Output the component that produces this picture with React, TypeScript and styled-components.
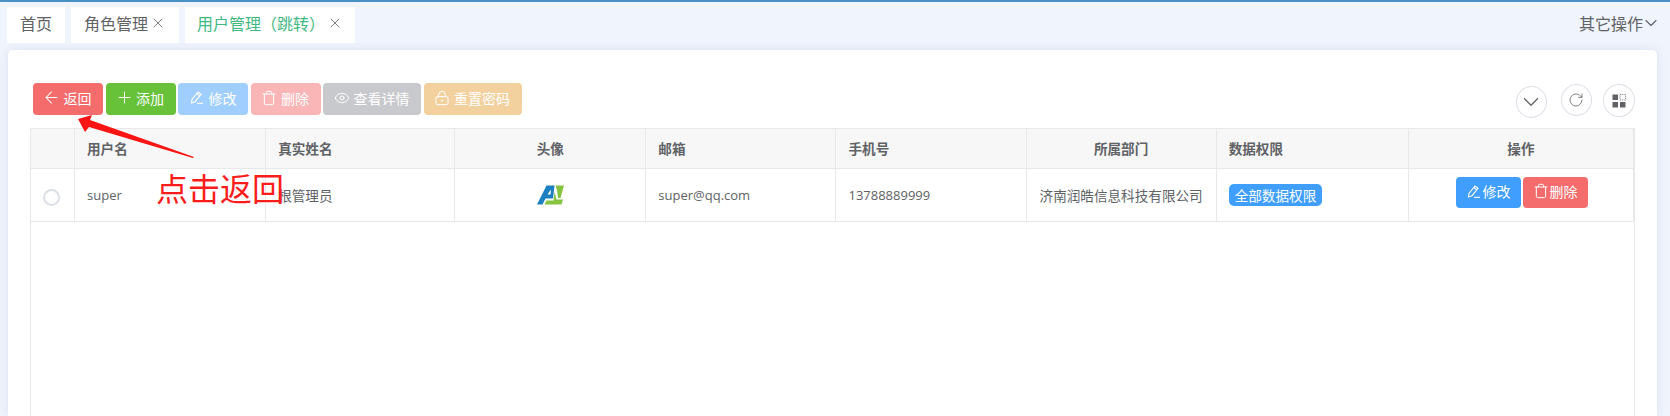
import React from "react";
import styled, { createGlobalStyle } from "styled-components";
import { ArrowLeft, ChevronDown, Eye, LockKeyhole, Plus, RotateCw, Trash, X } from "lucide-react";

const GlobalStyle = createGlobalStyle`
  html, body {
    margin: 0;
    padding: 0;
    height: 416px;
    overflow: hidden;
  }

  body {
    font-family: "Open Sans", "Noto Sans CJK SC", sans-serif;
    font-size: 13.6px;
    color: #606266;
  }
`;

const Page = styled.div`
  position: relative;
  display: flex;
  flex-direction: column;
  height: 416px;
  box-sizing: border-box;
  overflow: hidden;
  background: #f0f4fc;
  border-top: 2px solid #4a90c4;
`;

const TabBar = styled.div`
  display: flex;
  align-items: center;
  gap: 6px;
  height: 36px;
  margin: 5px 13px 7px 7px;
`;

const Tab = styled.div<{ $active?: boolean; $width: number }>`
  display: flex;
  align-items: center;
  justify-content: center;
  gap: 2px;
  width: ${({ $width }) => $width}px;
  height: 36px;
  box-sizing: border-box;
  padding-bottom: 5px;
  background: #fff;
  font-size: 16px;
  color: ${({ $active }) => ($active ? "#42b983" : "#606266")};

  svg {
    color: #606266;
  }
`;

const MoreMenu = styled.div`
  display: flex;
  align-items: center;
  margin-left: auto;
  padding-bottom: 4px;
  font-size: 16px;
  color: #606266;

  svg {
    margin: 0 -4px 0 -2px;
  }
`;

const Card = styled.main`
  display: flex;
  flex: 1;
  flex-direction: column;
  min-height: 0;
  margin: 0 13px 0 8px;
  padding: 33px 22px 0;
  background: #fff;
  border-radius: 5px 5px 0 0;
  box-shadow: 0 0 10px rgba(190, 200, 230, 0.45);
`;

const Toolbar = styled.div`
  display: flex;
  justify-content: space-between;
  height: 32px;
  margin-bottom: 13px;
`;

const ButtonGroup = styled.div`
  display: flex;
  gap: 2.5px;
  margin-left: 3px;
`;

const ActionButton = styled.button<{ $color: string; $small?: boolean }>`
  display: inline-flex;
  align-items: center;
  justify-content: center;
  gap: ${({ $small }) => ($small ? 1 : 5)}px;
  height: ${({ $small }) => ($small ? 31 : 32)}px;
  padding: 0 ${({ $small }) => ($small ? 11 : 11.5)}px 3px;
  border: 0;
  border-radius: 4px;
  background: ${({ $color }) => $color};
  color: #fff;
  font-family: inherit;
  font-size: 14px;
`;

const IconSlot = styled.span`
  display: flex;
  flex: none;
  align-items: center;
  justify-content: center;
  width: 14px;
  height: 14px;
`;

const RoundTools = styled.div`
  display: flex;
  gap: 11.5px;
  margin-top: 1px;
`;

const RoundButton = styled.button<{ $size: number; $offset?: boolean }>`
  display: flex;
  align-items: center;
  justify-content: center;
  width: ${({ $size }) => $size}px;
  height: ${({ $size }) => $size + 1}px;
  margin-top: ${({ $offset }) => ($offset ? 2 : 0)}px;
  margin-right: ${({ $offset }) => ($offset ? 2.5 : 0)}px;
  padding: 0;
  border: 1px solid #dcdfe6;
  border-radius: 50%;
  background: #fff;
  color: #606266;
`;

const TableWrap = styled.div`
  flex: 1;
  min-height: 0;
  box-sizing: border-box;
  border: 1px solid #e8e8e8;
  border-bottom: 0;
`;

const Table = styled.table`
  width: 1603px;
  table-layout: fixed;
  border-collapse: separate;
  border-spacing: 0;
`;

const HeadCell = styled.th<{ $center?: boolean }>`
  height: 40px;
  padding: 0 12px 2px;
  box-sizing: border-box;
  background: #f7f7f7;
  border-right: 1px solid #e8e8e8;
  border-bottom: 1px solid #e8e8e8;
  font-size: 13.6px;
  font-weight: 700;
  color: #606266;
  text-align: ${({ $center }) => ($center ? "center" : "left")};
`;

const Cell = styled.td<{ $center?: boolean; $latin?: boolean }>`
  height: 53px;
  padding: 0 12px;
  box-sizing: border-box;
  border-right: 1px solid #e8e8e8;
  border-bottom: 1px solid #e8e8e8;
  font-size: ${({ $latin }) => ($latin ? 13 : 13.6)}px;
  color: #606266;
  text-align: ${({ $center }) => ($center ? "center" : "left")};
  white-space: nowrap;
`;

const Radio = styled.span`
  display: block;
  width: 17px;
  height: 17px;
  box-sizing: border-box;
  margin: 4px 0 0;
  border: 2px solid #dcdfe6;
  border-radius: 50%;
`;

const Tag = styled.span`
  display: inline-block;
  height: 22px;
  padding: 0 6px;
  border-radius: 5px;
  background: #409eff;
  color: #fff;
  font-size: 13.6px;
  line-height: 23px;
`;

const RowActions = styled.div`
  display: flex;
  justify-content: center;
  gap: 2px;
  padding-left: 3px;
  padding-bottom: 5px;
`;

const Annotation = styled.div`
  position: absolute;
  top: 167px;
  left: 156px;
  color: #fb1c1c;
  font-family: "Noto Sans CJK SC", sans-serif;
  font-size: 32px;
  font-weight: 400;
  line-height: 36px;
  white-space: nowrap;
`;

const ArrowMark = styled.svg`
  position: absolute;
  top: 0;
  left: 0;
`;

const columns = [44, 191, 189, 191, 190, 190, 190, 192, 225];

const EditIcon = () => (
  <svg width="15" height="15" viewBox="0 0 14 14" fill="none" stroke="currentColor" strokeWidth="1.1">
    <path d="M1.5 12.5 2 9 8 1.5 11 3.8 5 11.2z" />
    <path d="M6.8 3 9.8 5.3" />
    <path d="M7 12.8H13" />
  </svg>
);

const GridIcon = () => (
  <svg width="14" height="14" viewBox="0 0 14 14" fill="#606266">
    <rect x="0.5" y="0.5" width="5.5" height="5.5" />
    <rect x="8" y="0.5" width="5.5" height="5.5" fill="none" stroke="#606266" strokeWidth="0.8" strokeDasharray="1.2 1" />
    <rect x="0.5" y="8" width="5.5" height="5.5" />
    <rect x="8" y="8" width="5.5" height="5.5" />
  </svg>
);

const Logo = () => (
  <svg width="27" height="20" viewBox="0 0 27 20" style={{ display: "block", margin: "0 auto" }}>
    <path fillRule="evenodd" d="M0 19.5 9.5 0.5H17.5L16 13.5H8.5L5.5 19.5zM10.5 9.5H13.5L14 4.5z" fill="#1c7fc0" />
    <path d="M18.5 0.5H27L23.5 13 21 13 20 5z" fill="#86c440" />
    <path d="M17.5 7 19.5 14.5H26L24.5 19.5H7.5L9.5 15.5H16.5z" fill="#86c440" />
  </svg>
);

function App(): JSX.Element {
  return (
    <Page>
      <GlobalStyle />
      <TabBar>
        <Tab $width={58}>首页</Tab>
        <Tab $width={108}>
          角色管理
          <X size={16} strokeWidth={1.2} />
        </Tab>
        <Tab $width={170} $active>
          用户管理（跳转）
          <X size={16} strokeWidth={1.2} />
        </Tab>
        <MoreMenu>
          其它操作
          <ChevronDown size={20} strokeWidth={1.3} />
        </MoreMenu>
      </TabBar>
      <Card>
        <Toolbar>
          <ButtonGroup>
            <ActionButton $color="#f56c6c">
              <IconSlot><ArrowLeft size={19} strokeWidth={1.3} style={{ flex: "none" }} /></IconSlot>返回
            </ActionButton>
            <ActionButton $color="#67c23a">
              <IconSlot><Plus size={19} strokeWidth={1.3} style={{ flex: "none" }} /></IconSlot>添加
            </ActionButton>
            <ActionButton $color="#a0cfff">
              <IconSlot><EditIcon /></IconSlot>修改
            </ActionButton>
            <ActionButton $color="#fab6b6">
              <IconSlot><Trash size={16} strokeWidth={1.5} style={{ flex: "none" }} /></IconSlot>删除
            </ActionButton>
            <ActionButton $color="#c8c9cc">
              <IconSlot><Eye size={16} strokeWidth={1.5} style={{ flex: "none" }} /></IconSlot>查看详情
            </ActionButton>
            <ActionButton $color="#f3d19e">
              <IconSlot><LockKeyhole size={16} strokeWidth={1.5} style={{ flex: "none" }} /></IconSlot>重置密码
            </ActionButton>
          </ButtonGroup>
          <RoundTools>
            <RoundButton $size={31} $offset><ChevronDown size={26} strokeWidth={1.2} /></RoundButton>
            <RoundButton $size={31}><RotateCw size={16} strokeWidth={1.2} /></RoundButton>
            <RoundButton $size={32}><GridIcon /></RoundButton>
          </RoundTools>
        </Toolbar>
        <TableWrap>
          <Table>
            <colgroup>
              {columns.map((width, index) => (
                <col key={index} style={{ width }} />
              ))}
            </colgroup>
            <thead>
              <tr>
                <HeadCell />
                <HeadCell>用户名</HeadCell>
                <HeadCell>真实姓名</HeadCell>
                <HeadCell $center>头像</HeadCell>
                <HeadCell>邮箱</HeadCell>
                <HeadCell>手机号</HeadCell>
                <HeadCell $center>所属部门</HeadCell>
                <HeadCell>数据权限</HeadCell>
                <HeadCell $center>操作</HeadCell>
              </tr>
            </thead>
            <tbody>
              <tr>
                <Cell><Radio /></Cell>
                <Cell $latin>super</Cell>
                <Cell>根管理员</Cell>
                <Cell $center><Logo /></Cell>
                <Cell $latin>super@qq.com</Cell>
                <Cell $latin>13788889999</Cell>
                <Cell $center>济南润皓信息科技有限公司</Cell>
                <Cell><Tag>全部数据权限</Tag></Cell>
                <Cell>
                  <RowActions>
                    <ActionButton $small $color="#409eff">
                      <IconSlot><EditIcon /></IconSlot>修改
                    </ActionButton>
                    <ActionButton $small $color="#f56c6c">
                      <IconSlot><Trash size={16} strokeWidth={1.5} style={{ flex: "none" }} /></IconSlot>删除
                    </ActionButton>
                  </RowActions>
                </Cell>
              </tr>
            </tbody>
          </Table>
        </TableWrap>
      </Card>
      <ArrowMark width="200" height="160" viewBox="0 0 200 160">
        <path d="M78 117 92 113 90 118 194 155 193 156 89 125 85 130z" fill="#fb1414" />
      </ArrowMark>
      <Annotation>点击返回</Annotation>
    </Page>
  );
}

export default App;
